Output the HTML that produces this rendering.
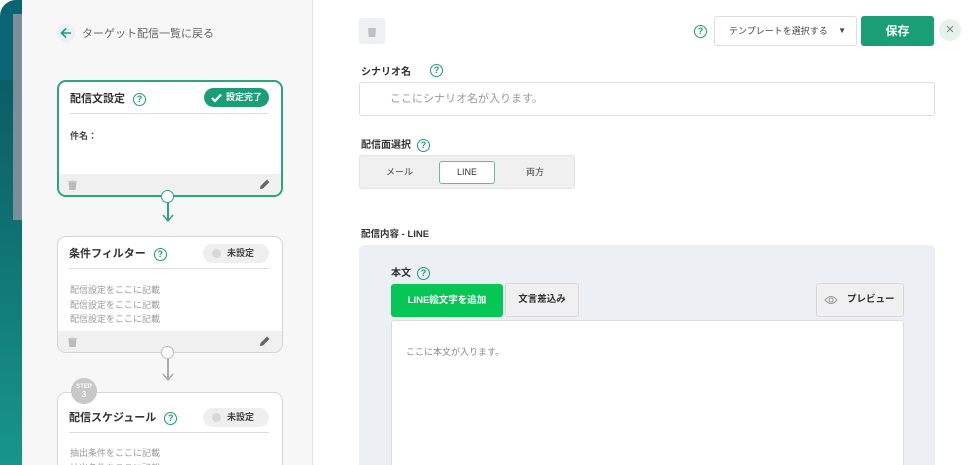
<!DOCTYPE html><html><head><meta charset="utf-8"><style>
*{box-sizing:border-box;margin:0;padding:0}
html,body{width:975px;height:465px;overflow:hidden}
body{position:relative;background:#fff;font-family:"Liberation Sans","Noto Sans CJK JP",sans-serif;color:#333}
.a{position:absolute}
.q{display:inline-block;vertical-align:middle;width:13px;height:13px;border:1.5px solid #1a9e75;border-radius:50%;color:#1a9e75;font-size:9px;font-weight:bold;text-align:center;line-height:10px;margin-left:8px}
.a.q{margin-left:0}
.card{position:absolute;left:57px;width:226px;background:#fff;border:1px solid #d6d6d6;border-radius:9px;overflow:hidden}
.card .t{position:absolute;left:11px;top:8px;font-size:11px;font-weight:bold;color:#333;white-space:nowrap}
.card .hr{position:absolute;left:11px;right:13px;top:31px;border-top:1px solid #ddd}
.card .ft{position:absolute;left:0;right:0;bottom:0;height:21px;background:#f0f0f0}
.card .tx{position:absolute;left:12px;top:46px;font-size:9px;color:#999;line-height:14.5px}
.pill{position:absolute;right:13px;top:7px;width:66px;height:19px;border-radius:10px;background:#efefef;font-size:9px;font-weight:bold;color:#444;line-height:19px;padding-left:24px}
.pill:before{content:"";position:absolute;left:9px;top:5px;width:9px;height:9px;border-radius:50%;background:#d8d8d8}
.conn{position:absolute;width:13px;height:13px;border-radius:50%;background:#fff;border:1.5px solid #2aa57d}
.vl{position:absolute;width:1.5px}
.lbl{position:absolute;font-size:10px;font-weight:bold;color:#333;white-space:nowrap}
</style></head><body>
<div class="a" style="left:0;top:0;width:22px;height:465px;background:linear-gradient(#0b6474 0,#0b6474 80px,#0c5c66 80px,#0f6f72 220px,#17968a 465px)"></div>
<div class="a" style="left:13px;top:0;width:9px;height:220px;background:#7a8f99"></div>
<div class="a" style="left:0;top:0;width:22px;height:22px;background:#fff"></div>
<div class="a" style="left:0;top:0;width:30px;height:30px;background:#0b6474;border-top-left-radius:16px"></div>
<div class="a" style="left:13px;top:14px;width:9px;height:16px;background:#7a8f99"></div>
<div class="a" style="left:22px;top:0;width:291px;height:465px;background:#f7f7f7;border-right:1.5px solid #e3e3e3"></div>
<div class="a" style="left:57px;top:24px;width:18px;height:18px;border-radius:50%;background:#eaf0f3"></div>
<svg class="a" style="left:60px;top:27px" width="12" height="12" viewBox="0 0 12 12"><path d="M11 6H2M6 1.5L1.5 6 6 10.5" stroke="#1a9e75" stroke-width="1.6" fill="none"/></svg>
<div class="a" style="left:82px;top:25px;font-size:11px;color:#666">ターゲット配信一覧に戻る</div>

<div class="card" style="top:80px;height:117px;border:2px solid #2aa57d">
<div class="t">配信文設定<span class="q">?</span></div>
<div class="a" style="right:12px;top:6px;width:65px;height:19px;border-radius:10px;background:#1a9e75;color:#fff;font-size:9px;font-weight:bold;line-height:19px;padding-left:22px">設定完了</div>
<svg class="a" style="left:152px;top:11px" width="11" height="10"><path d="M1 5l3 3 6-6.5" stroke="#fff" stroke-width="2.2" fill="none"/></svg>
<div class="hr"></div>
<div class="a" style="left:11px;top:47px;font-size:9px;font-weight:bold;color:#444">件名：</div>
<div class="ft"></div>
</div>
<div class="conn" style="left:161px;top:190px"></div>
<div class="vl" style="left:167px;top:203px;height:18px;background:#2aa57d"></div>
<svg class="a" style="left:162px;top:214px" width="12" height="9"><path d="M1 1l5 6 5-6" stroke="#2aa57d" stroke-width="1.5" fill="none"/></svg>

<div class="card" style="top:236px;height:117px">
<div class="t">条件フィルター<span class="q">?</span></div>
<div class="pill">未設定</div><div class="hr"></div>
<div class="tx">配信設定をここに記載<br>配信設定をここに記載<br>配信設定をここに記載</div>
<div class="ft"></div>
</div>
<div class="conn" style="left:161px;top:346px;border-color:#bbb"></div>
<div class="vl" style="left:167px;top:359px;height:21px;background:#aaa"></div>
<svg class="a" style="left:162px;top:373px" width="12" height="9"><path d="M1 1l5 6 5-6" stroke="#aaa" stroke-width="1.5" fill="none"/></svg>

<div class="card" style="top:392px;height:73px;border-bottom:none;border-bottom-left-radius:0;border-bottom-right-radius:0">
<div class="t" style="top:16px">配信スケジュール<span class="q">?</span></div>
<div class="pill" style="top:15px">未設定</div><div class="hr" style="top:39px"></div>
<div class="tx" style="top:53px">抽出条件をここに記載<br>抽出条件をここに記載</div>
</div>
<div class="a" style="left:71px;top:378px;width:26px;height:26px;border-radius:50%;background:#c8c8c8;color:#fff;font-size:6px;font-weight:bold;text-align:center;line-height:8px;padding-top:5px">STEP<br><span style="font-size:8px">3</span></div>
<svg class="a" style="left:68px;top:180px" width="9" height="10"><path d="M0 1.5h9M3 0h3M1 2.5h7l-.7 7.5H1.7z" fill="#bbb" stroke="#bbb" stroke-width=".8"/></svg>
<svg class="a" style="left:68px;top:337px" width="9" height="10"><path d="M0 1.5h9M3 0h3M1 2.5h7l-.7 7.5H1.7z" fill="#bbb" stroke="#bbb" stroke-width=".8"/></svg>
<svg class="a" style="left:259px;top:179px" width="11" height="11"><path d="M1 10l.5-3L8 .5 10.5 3 4 9.5z" fill="#666"/></svg>
<svg class="a" style="left:259px;top:336px" width="11" height="11"><path d="M1 10l.5-3L8 .5 10.5 3 4 9.5z" fill="#666"/></svg>

<div class="a" style="left:359px;top:18px;width:26px;height:26px;background:#eef0f4;border-radius:3px"></div>
<svg class="a" style="left:367px;top:25px" width="10" height="12"><path d="M0 2h10M3.5 0h3M1 3h8l-.7 9H1.7z" fill="#c0c0c0"/></svg>
<div class="a q" style="left:694px;top:25px">?</div>
<div class="a" style="left:714px;top:16px;width:143px;height:30px;border:1px solid #ddd;border-radius:3px;font-size:9px;color:#444;line-height:28px;padding-left:14px">テンプレートを選択する<span style="position:absolute;right:10px;font-size:8px">&#9660;</span></div>
<div class="a" style="left:861px;top:16px;width:73px;height:30px;background:#1a9e75;border-radius:3px;color:#fff;font-size:12px;font-weight:bold;text-align:center;line-height:30px">保存</div>
<div class="a" style="left:939px;top:19px;width:22px;height:22px;border-radius:50%;background:#e6f2ec;color:#888;text-align:center;line-height:22px;font-size:15px">×</div>

<div class="lbl" style="left:361px;top:63px">シナリオ名</div><div class="a q" style="left:430px;top:64px">?</div>
<div class="a" style="left:359px;top:82px;width:576px;height:34px;border:1px solid #ddd;border-radius:3px;font-size:11px;color:#999;line-height:32px;padding-left:30px">ここにシナリオ名が入ります。</div>

<div class="lbl" style="left:361px;top:136px">配信面選択<span class="q" style="margin-left:6px">?</span></div>
<div class="a" style="left:359px;top:155px;width:216px;height:34px;background:#f0f0f0;border:1px solid #e3e3e3;border-radius:3px"></div>
<div class="a" style="left:386px;top:165px;font-size:9px;color:#444">メール</div>
<div class="a" style="left:439px;top:161px;width:56px;height:23px;background:#fff;border:1.5px solid #5bbf9c;border-radius:3px;font-size:9px;color:#333;text-align:center;line-height:21px">LINE</div>
<div class="a" style="left:526px;top:165px;font-size:9px;color:#444">両方</div>

<div class="lbl" style="left:361px;top:226px;font-size:9.5px">配信内容 - LINE</div>
<div class="a" style="left:359px;top:245px;width:576px;height:220px;background:#eceff4;border-radius:5px 5px 0 0"></div>
<div class="lbl" style="left:391px;top:264px">本文<span class="q" style="margin-left:6px">?</span></div>
<div class="a" style="left:391px;top:284px;width:112px;height:33px;background:#06c755;border-radius:3px;color:#fff;font-size:9.5px;font-weight:bold;text-align:center;line-height:33px">LINE絵文字を追加</div>
<div class="a" style="left:505px;top:283px;width:74px;height:34px;background:#f0f0f0;border:1px solid #d8d8d8;border-radius:3px;font-size:9.5px;font-weight:bold;text-align:center;line-height:32px;color:#333">文言差込み</div>
<div class="a" style="left:816px;top:283px;width:88px;height:34px;background:#f0f0f0;border:1px solid #d8d8d8;border-radius:3px;font-size:9.5px;font-weight:bold;line-height:32px;color:#333;padding-left:30px">プレビュー</div>
<svg class="a" style="left:824px;top:295px" width="14" height="10"><path d="M1 5q6-7 12 0q-6 7-12 0z" fill="none" stroke="#999"/><circle cx="7" cy="5" r="2" fill="none" stroke="#999"/></svg>
<div class="a" style="left:391px;top:320px;width:513px;height:145px;background:#fff;border:1px solid #ddd;border-bottom:none;border-radius:3px 3px 0 0"></div>
<div class="a" style="left:406px;top:345px;font-size:9px;color:#888">ここに本文が入ります。</div>
</body></html>
